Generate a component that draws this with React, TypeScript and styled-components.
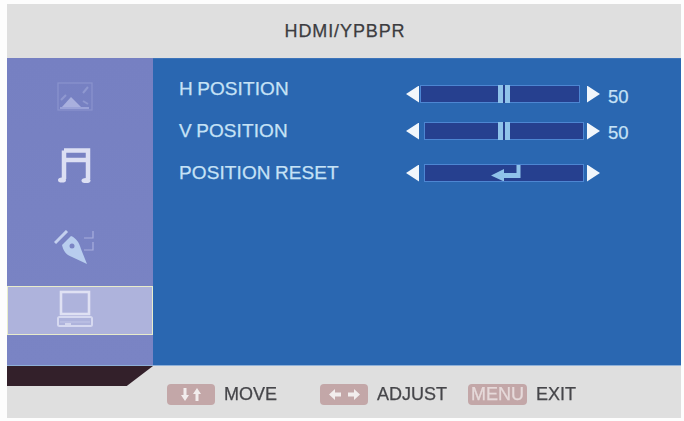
import styled, { createGlobalStyle } from 'styled-components';

const Global = createGlobalStyle`
  html, body {
    margin: 0;
    padding: 0;
    background: #fdfdfd;
  }
`;

const Screen = styled.div`
  width: 674px;
  height: 414px;
  margin: 4px 0 0 7px;
  display: flex;
  flex-direction: column;
  font-family: 'Liberation Sans', Arial, sans-serif;
  -webkit-text-stroke: 0.25px currentColor;
  filter: blur(0.6px);
  overflow: hidden;
`;

const Header = styled.header`
  height: 54px;
  background: #dfdfdf;
  color: #3c3c40;
  font-size: 18px;
  letter-spacing: 0.9px;
  display: flex;
  align-items: center;
  justify-content: center;
  padding-left: 2px;
  box-sizing: border-box;
`;

const Body = styled.div`
  height: 307px;
  display: flex;
`;

const Sidebar = styled.nav`
  width: 146px;
  padding-top: 14px;
  box-sizing: border-box;
  background: linear-gradient(#7680c2, #7a84c4);
  display: flex;
  flex-direction: column;
`;

const MenuItem = styled.div<{ $top: number; $selected?: boolean }>`
  height: 49px;
  margin-top: ${(p) => p.$top}px;
  padding: ${(p) => (p.$selected ? '0 10px 4px 0' : '0 10px 0 0')};
  box-sizing: border-box;
  display: flex;
  align-items: center;
  justify-content: center;
  background: ${(p) => (p.$selected ? '#aeb3dc' : 'transparent')};
  border: ${(p) => (p.$selected ? '1.5px solid #e8eccb' : 'none')};
`;

const Content = styled.main`
  flex: 1;
  padding-top: 9px;
  box-sizing: border-box;
  background: #2a67b1;
  border-top: 1px solid #3d74ba;
  display: flex;
  flex-direction: column;
`;

const Row = styled.div`
  height: 42px;
  padding-left: 26px;
  display: flex;
  align-items: center;
  color: #c6e2f6;
  font-size: 18px;
`;

const Label = styled.span`
  width: 227px;
  font-size: 19px;
  word-spacing: -1px;
  letter-spacing: 0.1px;
`;

const Slider = styled.div<{ $drop: number }>`
  margin-top: ${(p) => p.$drop * 2}px;
  display: flex;
  align-items: center;
`;

const Arrow = styled.span<{ $dir: 'left' | 'right' }>`
  width: 13px;
  height: 17px;
  background: #f1f6fb;
  clip-path: ${(p) =>
    p.$dir === 'left' ? 'polygon(0 50%, 100% 0, 100% 100%)' : 'polygon(0 0, 100% 50%, 0 100%)'};
`;

const Track = styled.div<{ $shift: number }>`
  width: 160px;
  height: 18px;
  margin: 0 ${(p) => 3 + p.$shift}px 0 ${(p) => 5 - p.$shift}px;
  box-sizing: border-box;
  background: #26408f;
  border: 1px solid #4d86d2;
  position: relative;
  display: flex;
  align-items: center;
  justify-content: center;
`;

const Thumb = styled.div<{ $left: number }>`
  position: absolute;
  top: -1px;
  left: ${(p) => p.$left}px;
  width: 12px;
  height: 18px;
  background: linear-gradient(90deg, #8fc3ea 0 40%, #26408f 40% 60%, #8fc3ea 60% 100%);
`;

const ReturnMark = styled.span`
  display: flex;
  padding-left: 4px;
`;

const Value = styled.span<{ $drop: number }>`
  margin: ${(p) => p.$drop}px 0 0 8px;
  font-size: 18.5px;
`;

const Footer = styled.footer`
  flex: 1;
  background: #dfdfdf;
  border-top: 1px solid #8fb0d8;
  display: flex;
  align-items: flex-start;
`;

const CornerTab = styled.div`
  width: 146px;
  height: 20px;
  background: #33202a;
  clip-path: polygon(0 0, 100% 0, 82% 100%, 0 100%);
`;

const Legend = styled.div`
  margin: 17px 0 0 14px;
  display: flex;
  align-items: center;
  color: #46464a;
  font-size: 18px;
`;

const Key = styled.span<{ $width: number; $gap: number }>`
  width: ${(p) => p.$width}px;
  height: 21px;
  margin-left: ${(p) => p.$gap}px;
  border-radius: 4px;
  background: #c3a7a8;
  color: #e6dada;
  display: flex;
  align-items: center;
  justify-content: center;
`;

const KeyLabel = styled.span`
  margin-left: 9px;
  padding-top: 1px;
`;

const ImageIcon = () => (
  <svg width="36" height="30" viewBox="0 0 36 30" fill="none">
    <rect x="1" y="1" width="34" height="27" stroke="#8a93cd" strokeWidth="1.2" />
    <path d="M5 25 L14 15 L24 25 Z" fill="#a9b0de" />
    <path d="M4 18 L9 13 M26 11 L31 5 M26 19 L31 22" stroke="#8f98d0" strokeWidth="2" />
    <rect x="3" y="25" width="29" height="2" fill="#9aa2d8" />
  </svg>
);

const MusicIcon = () => (
  <svg width="36" height="36" viewBox="0 0 36 36" fill="none">
    <path d="M7 2.5 H31 V31 M7 2.5 V31 M7 12 H31" stroke="#dcdff3" strokeWidth="4.5" />
    <ellipse cx="5" cy="32" rx="4" ry="2.6" fill="#dcdff3" />
    <ellipse cx="29" cy="32.5" rx="4.5" ry="2.6" fill="#dcdff3" />
  </svg>
);

const PenIcon = () => (
  <svg width="42" height="36" viewBox="0 0 42 36" fill="none">
    <path d="M1 13 L13 1" stroke="#c4d0ee" strokeWidth="3" />
    <path d="M8 15 L17 6 C22 8 25 12 27 19 L33 34 L18 27 C12 25 9 20 8 15 Z" fill="#b8cdee" />
    <circle cx="18" cy="16" r="2.5" fill="#7a84c4" />
    <path d="M30 8 H39 V1 M30 20 H39 V12" stroke="#a7aede" strokeWidth="1.2" />
  </svg>
);

const LaptopIcon = () => (
  <svg width="36" height="38" viewBox="0 0 36 38" fill="none">
    <rect x="4" y="2" width="28" height="22" stroke="#dfe1f3" strokeWidth="2.6" fill="none" />
    <rect x="1" y="27" width="34" height="9" rx="1.5" stroke="#d6d9f0" strokeWidth="2" />
    <path d="M3 32 H33" stroke="#c2c6e8" strokeWidth="1" />
    <path d="M8 34 H14" stroke="#e3e5f5" strokeWidth="1.4" />
  </svg>
);

const ReturnIcon = () => (
  <svg width="30" height="16" viewBox="0 0 30 16">
    <path d="M0 10.5 L13 4 V8 H25.5 V0 H29.5 V13 H13 V16.5 Z" fill="#8fc3ea" />
  </svg>
);

const UpDownGlyph = () => (
  <svg width="20" height="13" viewBox="0 0 20 13" fill="#f2eded">
    <path d="M2.5 0 H5.5 V7 H8 L4 13 L0 7 H2.5 Z" />
    <path d="M14.5 13 H17.5 V6 H20 L16 0 L12 6 H14.5 Z" />
  </svg>
);

const LeftRightGlyph = () => (
  <svg width="31" height="11" viewBox="0 0 31 11" fill="#f2eded">
    <path d="M0 5.5 L6 0 V3.5 H12 V7.5 H6 V11 Z" />
    <path d="M31 5.5 L25 0 V3.5 H19 V7.5 H25 V11 Z" />
  </svg>
);

const rows = [
  { label: 'H POSITION', shift: 4, value: 50, drop: 5, valueDrop: 6, thumb: 77 },
  { label: 'V POSITION', shift: 0, value: 50, drop: 0, valueDrop: 3, thumb: 73 },
];

export default function App() {
  return (
    <>
      <Global />
      <Screen>
        <Header>HDMI/YPBPR</Header>
        <Body>
          <Sidebar>
            <MenuItem $top={0}>
              <ImageIcon />
            </MenuItem>
            <MenuItem $top={20}>
              <MusicIcon />
            </MenuItem>
            <MenuItem $top={33}>
              <PenIcon />
            </MenuItem>
            <MenuItem $top={14} $selected>
              <LaptopIcon />
            </MenuItem>
          </Sidebar>
          <Content>
            {rows.map((r) => (
              <Row key={r.label}>
                <Label>{r.label}</Label>
                <Slider $drop={r.drop}>
                  <Arrow $dir="left" />
                  <Track $shift={r.shift}>
                    <Thumb $left={r.thumb} />
                  </Track>
                  <Arrow $dir="right" />
                  <Value $drop={r.valueDrop}>{r.value}</Value>
                </Slider>
              </Row>
            ))}
            <Row>
              <Label>POSITION RESET</Label>
              <Slider $drop={0}>
                <Arrow $dir="left" />
                <Track $shift={0}>
                  <ReturnMark>
                    <ReturnIcon />
                  </ReturnMark>
                </Track>
                <Arrow $dir="right" />
              </Slider>
            </Row>
          </Content>
        </Body>
        <Footer>
          <CornerTab />
          <Legend>
            <Key $width={48} $gap={0}>
              <UpDownGlyph />
            </Key>
            <KeyLabel>MOVE</KeyLabel>
            <Key $width={48} $gap={43}>
              <LeftRightGlyph />
            </Key>
            <KeyLabel>ADJUST</KeyLabel>
            <Key $width={59} $gap={21}>
              MENU
            </Key>
            <KeyLabel>EXIT</KeyLabel>
          </Legend>
        </Footer>
      </Screen>
    </>
  );
}
